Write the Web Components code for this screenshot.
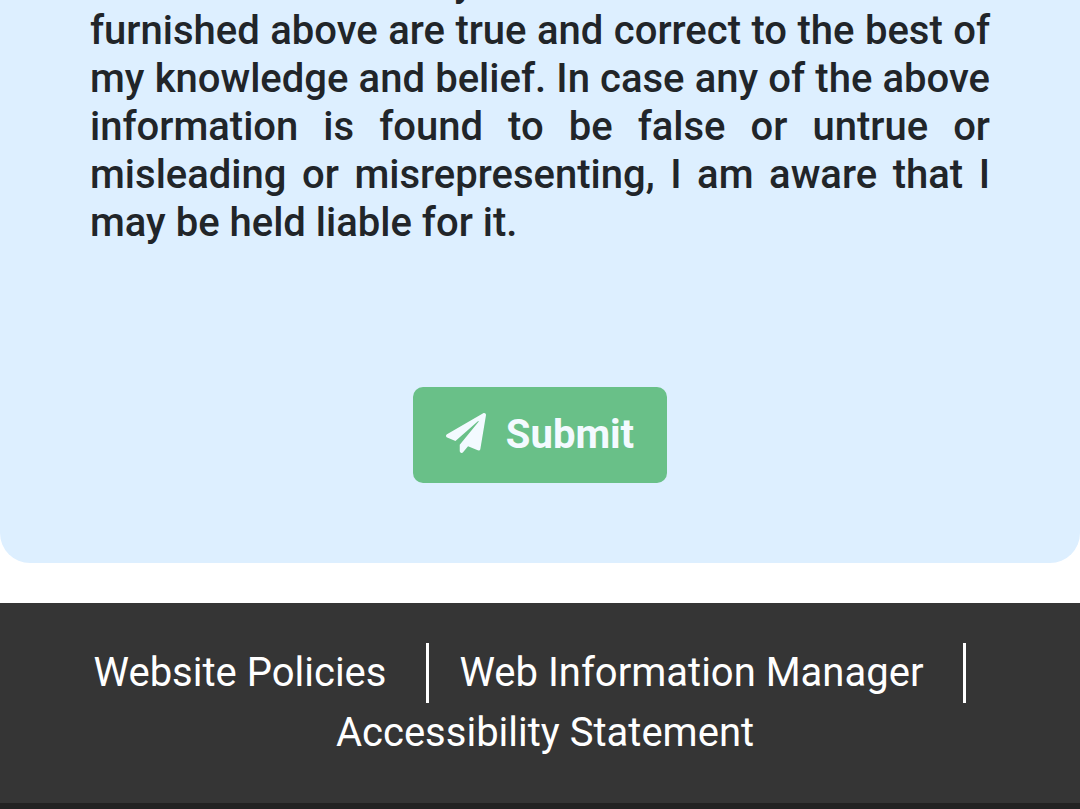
<!DOCTYPE html>
<html lang="en">
<head>
<meta charset="utf-8">
<meta name="viewport" content="width=device-width, initial-scale=1">
<title>Declaration</title>
<style>
html{background:#fff}
body{margin:0;font-family:Roboto,"Liberation Sans",sans-serif;font-size:40px;line-height:48px;color:#212529;overflow:hidden}
</style>
</head>
<body>
<declaration-card>
  <declaration-text>furnished above are true and correct to the best of my knowledge and belief. In case any of the above information is found to be false or untrue or misleading or misrepresenting, I am aware that I may be held liable for it.</declaration-text>
  <submit-button slot="action">Submit</submit-button>
</declaration-card>
<site-footer>
  <footer-link href="#policies">Website Policies</footer-link>
  <footer-link href="#manager">Web Information Manager</footer-link>
  <footer-link href="#accessibility" last>Accessibility Statement</footer-link>
</site-footer>
<script>
const define = (name, html, setup) => customElements.define(name, class extends HTMLElement {
  connectedCallback() {
    if (this.shadowRoot) return;
    this.attachShadow({mode: "open"}).innerHTML = html;
    if (setup) setup(this, this.shadowRoot);
  }
});

define("declaration-card", `
<style>
:host{display:block}
section{background:#ddefff;border-radius:0 0 30px 30px;padding:0 90px 80px;overflow:hidden}
.action{display:flex;justify-content:center;margin-top:140px}
</style>
<section><slot></slot><div class="action"><slot name="action"></slot></div></section>`);

/* The first line is scrolled almost out of view; only its descender shows. */
define("declaration-text", `
<style>
:host{display:block}
p{margin:-41px 0 0;font-weight:500;text-align:justify}
.scrolled{display:block;text-align:left;padding-left:364px}
</style>
<p><span class="scrolled">y</span><slot></slot></p>`);

define("submit-button", `
<style>
:host{display:block}
button{display:flex;align-items:center;gap:20px;padding:24px 33px;border:0;border-radius:10px;background:#69c088;color:#f3faff;font:inherit;font-weight:700}
svg{display:block;width:40px;height:40px;margin-bottom:4px}
</style>
<button type="submit"><svg viewBox="0 0 512 512" fill="currentColor" aria-hidden="true"><path d="M476 3.2L12.5 270.6c-18.1 10.4-15.8 35.6 2.2 43.2L121 358.4l287.3-253.2c5.5-4.9 13.3 2.6 8.6 8.3L176 407v80.5c0 23.6 28.5 32.9 42.5 15.8L282 426l124.6 52.2c14.2 6 30.4-2.9 33-18.2l72-432C515 7.8 493.3-6.8 476 3.2z"/></svg><slot></slot></button>`);

define("site-footer", `
<style>
:host{display:block;margin-top:40px}
footer{background:#353535;border-bottom:40px solid #222;line-height:60px;color:#fff}
nav{display:flex;flex-wrap:wrap;justify-content:center;padding:40px 0 40px 10px}
</style>
<footer><nav aria-label="Footer"><slot></slot></nav></footer>`);

define("footer-link", `
<style>
:host{display:block;padding-right:40px;border-right:3px solid #fff;margin-right:30px}
:host([last]){padding-right:0;border-right:0;margin-right:0}
a{color:inherit;text-decoration:none}
</style>
<a><slot></slot></a>`, (host, root) => root.querySelector("a").href = host.getAttribute("href"));
</script>
</body>
</html>
